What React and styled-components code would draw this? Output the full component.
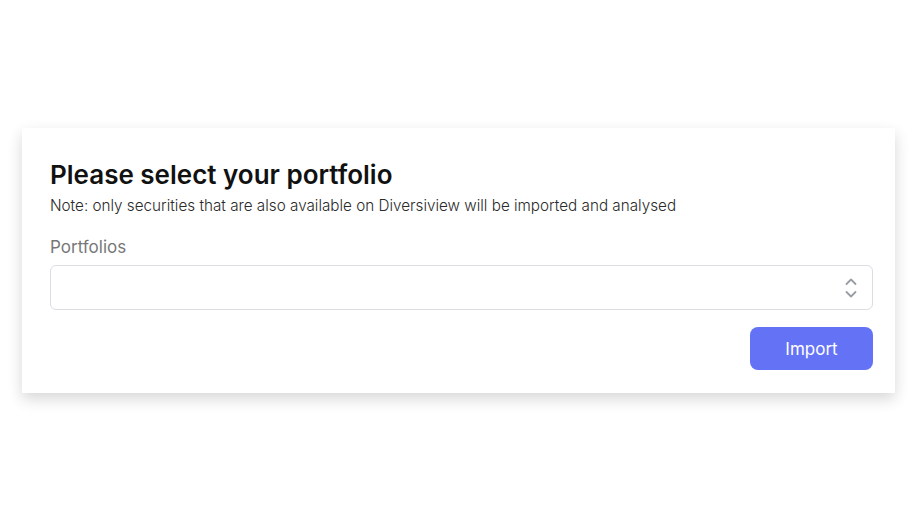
import React from "react";
import styled, { createGlobalStyle } from "styled-components";

const GlobalStyle = createGlobalStyle`
  * { box-sizing: border-box; }
  html, body { margin: 0; padding: 0; background: #ffffff; }
  body {
    font-family: Inter, "Noto Sans", sans-serif;
    color: #111111;
  }
`;

const Page = styled.div`
  min-height: 100vh;
  display: flex;
  align-items: center;
  padding: 0 22px 9px;
`;

const Card = styled.div`
  flex: 1;
  background: #ffffff;
  box-shadow: 0 6px 14px rgba(0, 0, 0, 0.16);
  padding: 31px 22px 23px 28px;
`;

const Title = styled.h2`
  margin: 0;
  font-size: 26px;
  line-height: 32px;
  font-weight: 600;
  color: #111111;
`;

const Note = styled.p`
  margin: 5px 0 0;
  font-size: 15.25px;
  line-height: 20px;
  font-weight: 300;
  color: #2a2a2a;
`;

const Label = styled.label`
  display: block;
  margin-top: 20px;
  font-size: 17px;
  line-height: 22px;
  color: #777777;
`;

const Select = styled.div`
  margin-top: 7px;
  height: 45px;
  border: 1px solid #dcdde3;
  border-radius: 6px;
  display: flex;
  align-items: center;
  justify-content: flex-end;
  padding-right: 14px;
  color: #9a9ca6;
`;

const Footer = styled.div`
  display: flex;
  justify-content: flex-end;
  margin-top: 17px;
`;

const Button = styled.button`
  width: 123px;
  height: 43px;
  border: none;
  border-radius: 8px;
  background: #6473f6;
  color: #ffffff;
  font-family: Inter, "Noto Sans", sans-serif;
  font-size: 17px;
  font-weight: 400;
  cursor: pointer;
`;

const Chevrons = () => (
  <svg width="14" height="22" viewBox="0 0 14 22" fill="none" stroke="currentColor" strokeWidth="1.8" strokeLinecap="round" strokeLinejoin="round">
    <path d="M2.5 7 L7 2.5 L11.5 7" />
    <path d="M2.5 15 L7 19.5 L11.5 15" />
  </svg>
);

export default function App() {
  return (
    <>
      <GlobalStyle />
      <Page>
        <Card>
          <Title>Please select your portfolio</Title>
          <Note>
            Note: only securities that are also available on Diversiview will be imported and analysed
          </Note>
          <Label>Portfolios</Label>
          <Select>
            <Chevrons />
          </Select>
          <Footer>
            <Button>Import</Button>
          </Footer>
        </Card>
      </Page>
    </>
  );
}
